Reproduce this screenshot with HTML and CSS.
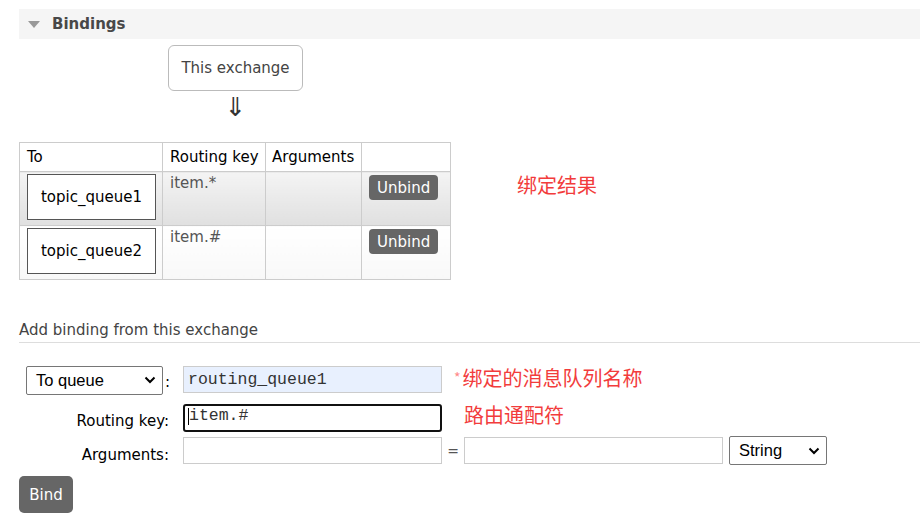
FILE: index.html
```html
<!DOCTYPE html>
<html>
<head>
<meta charset="utf-8">
<link rel="stylesheet" href="styles.css">
</head>
<body>
<div class="page">
  <div class="section-head">
    <span class="tri"></span>
    <span class="section-title">Bindings</span>
  </div>

  <div class="exchange-wrap">
    <div class="exchange-box">This exchange</div>
    <div class="arrow">&#8659;</div>
  </div>

  <div class="bind-row">
    <table class="bindings">
      <colgroup>
        <col class="c-to"><col class="c-rk"><col class="c-args"><col class="c-btn">
      </colgroup>
      <thead>
        <tr>
          <th>To</th>
          <th>Routing key</th>
          <th class="h-args">Arguments</th>
          <th></th>
        </tr>
      </thead>
      <tbody>
        <tr class="alt1">
          <td class="td-to"><div class="queue-box">topic_queue1</div></td>
          <td class="key">item.*</td>
          <td></td>
          <td class="td-btn"><button class="btn">Unbind</button></td>
        </tr>
        <tr class="alt2">
          <td class="td-to"><div class="queue-box">topic_queue2</div></td>
          <td class="key">item.#</td>
          <td></td>
          <td class="td-btn"><button class="btn">Unbind</button></td>
        </tr>
      </tbody>
    </table>
    <div class="note note-result">绑定结果</div>
  </div>

  <h3 class="add-title">Add binding from this exchange</h3>

  <div class="form">
    <div class="form-row row-dest">
      <div class="label-cell">
        <div class="select sel-dest"><span>To queue</span><svg class="chev" viewBox="0 0 12 8"><path d="M1.5 1.5 L6 6 L10.5 1.5" fill="none" stroke="#000" stroke-width="2"/></svg></div>
        <span class="colon">:</span>
      </div>
      <div class="input mono autofill">routing_queue1</div>
      <div class="note"><span class="star">*</span>绑定的消息队列名称</div>
    </div>
    <div class="form-row row-key">
      <div class="label-cell"><span class="label">Routing key:</span></div>
      <div class="input mono focused"><span class="caret"></span>item.#</div>
      <div class="note note-key">路由通配符</div>
    </div>
    <div class="form-row row-args">
      <div class="label-cell"><span class="label">Arguments:</span></div>
      <div class="input"></div>
      <span class="eq">=</span>
      <div class="input"></div>
      <div class="select sel-type"><span>String</span><svg class="chev" viewBox="0 0 12 8"><path d="M1.5 1.5 L6 6 L10.5 1.5" fill="none" stroke="#000" stroke-width="2"/></svg></div>
    </div>
  </div>

  <button class="btn bind-btn">Bind</button>
</div>
</body>
</html>
```

FILE: styles.css
```css
* { box-sizing: border-box; }
html, body { margin: 0; padding: 0; background: #fff; }
body {
  font-family: "DejaVu Sans", Verdana, sans-serif;
  font-size: 15px;
  color: #000;
}
.page { padding: 9px 0 0 19px; width: 920px; }

.section-head {
  height: 30px;
  background: #f5f5f5;
  display: flex;
  align-items: center;
  padding-left: 9px;
}
.tri {
  width: 0; height: 0;
  border-left: 6px solid transparent;
  border-right: 6px solid transparent;
  border-top: 7px solid #999;
  margin-right: 12px;
  margin-top: 1px;
}
.section-title { font-weight: bold; font-size: 15px; color: #484848; }

.exchange-wrap {
  width: 135px;
  margin-left: 149px;
  margin-top: 6px;
  display: flex;
  flex-direction: column;
  align-items: center;
}
.exchange-box {
  width: 135px;
  height: 46px;
  border: 1px solid #bbb;
  border-radius: 6px;
  display: flex;
  align-items: center;
  justify-content: center;
  color: #444;
}
.arrow { font-size: 26px; line-height: 30px; color: #333; margin-top: 1px; }

.bind-row { display: flex; align-items: flex-start; margin-top: 20px; }
.bindings {
  border-collapse: collapse;
  border: 1px solid #ccc;
  table-layout: fixed;
  width: 431px;
}
.bindings th, .bindings td { border: 1px solid #ccc; padding: 0; vertical-align: top; white-space: nowrap; }
.bindings th {
  font-weight: normal;
  text-align: left;
  height: 29px;
  padding: 5px 0 0 7px;
  color: #000;
}
col.c-to { width: 143px; }
col.c-rk { width: 103px; }
col.c-args { width: 96px; }
col.c-btn { width: 89px; }
.bindings th.h-args { padding-left: 6px; }
.bindings tbody td { height: 54px; }
.alt1 td { background: linear-gradient(#f4f4f4, #e0e0e0); }
.alt2 td { background: linear-gradient(#fff, #f8f8f8); }
.bindings td.td-to { padding: 2px 6px 0 7px; }
.queue-box {
  height: 46px;
  border: 1px solid #555;
  background: #fff;
  display: flex;
  align-items: center;
  justify-content: center;
  color: #000;
}
.bindings td.key { color: #555; padding: 2px 0 0 7px; }
.bindings td.td-btn { padding: 3px 0 0 7px; }
.btn {
  font-family: "DejaVu Sans", Verdana, sans-serif;
  background: #666;
  color: #fff;
  border: none;
  border-radius: 4px;
  font-size: 15px;
  height: 25px;
  padding: 0 8px;
}

.note {
  font-family: "Noto Sans CJK SC", "Microsoft YaHei", sans-serif;
  font-size: 20px;
  color: #f23c3c;
  line-height: 24px;
}
.note-result { margin-left: 66px; margin-top: 31px; }

.add-title {
  font-weight: normal;
  font-size: 15px;
  color: #444;
  margin: 41px 0 0 0;
  padding-bottom: 3px;
  border-bottom: 1px solid #ddd;
  line-height: 18px;
}

.form { margin-top: 22px; }
.form-row { display: flex; align-items: center; }
.label-cell {
  width: 164px;
  display: flex;
  justify-content: flex-end;
  align-items: center;
  margin-right: 0;
}
.row-dest .label-cell { justify-content: flex-start; padding-left: 7px; }
.label { color: #000; padding-right: 14px; }
.colon { margin-left: 2px; padding-top: 3px; }
.select {
  border: 1px solid #767676;
  border-radius: 2px;
  background: #fff;
  display: flex;
  align-items: center;
  justify-content: space-between;
  font-family: "Liberation Sans", Arial, sans-serif;
  font-size: 16.5px;
  padding: 0 6px 0 9px;
}
.sel-dest { width: 137px; height: 29px; }
.sel-type { width: 98px; height: 29px; margin-left: 6px; }
.chev { width: 12px; height: 8px; }

.input {
  width: 259px;
  height: 27px;
  border: 1px solid #ccc;
  background: #fff;
  display: flex;
  align-items: center;
  padding-left: 4px;
  position: relative;
}
.mono { font-family: "Liberation Mono", "Courier New", monospace; font-size: 16.5px; color: #333; }
.autofill { background: #e8f0fe; height: 27px; }
.focused {
  border: 2px solid #111;
  border-radius: 3px;
  height: 28px;
  padding-left: 3px;
  align-items: flex-start;
  padding-top: 0;
}
.caret { display: inline-block; width: 1px; height: 17px; background: #000; margin-top: 2px; }

.row-dest { height: 30px; }
.row-dest .input { margin-top: -2px; }
.row-dest .note { margin-left: 12px; margin-top: -6px; }
.star { font-size: 14px; color: #f88; margin-right: 2px; vertical-align: 3px; }

.row-key { margin-top: 9px; }
.row-key .label { padding-top: 5px; }
.row-key .note { margin-left: 22px; margin-top: -6px; }

.row-args { margin-top: 4px; }
.row-args .label { padding-top: 8px; }
.eq { color: #555; width: 22px; text-align: center; font-size: 14px; }

.bind-btn { height: 37px; width: 54px; border-radius: 5px; padding: 0; margin-top: 11px; font-size: 15px; }
```
